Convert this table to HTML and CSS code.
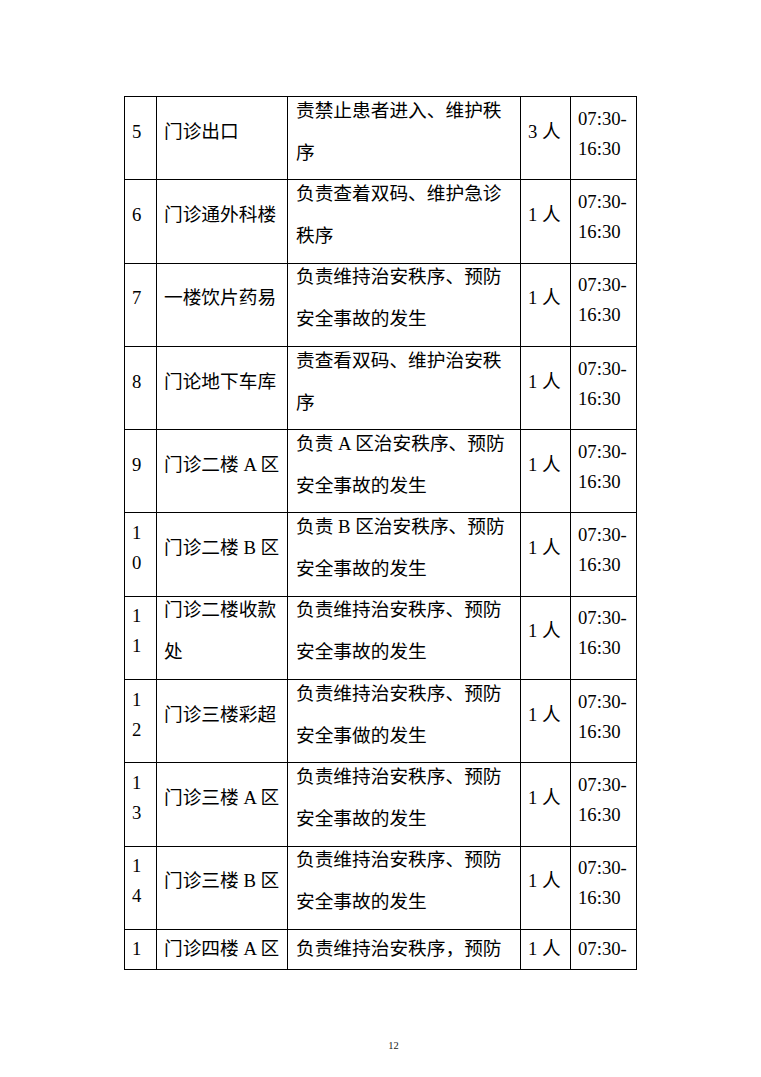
FILE: index.html
```html
<!DOCTYPE html>
<html lang="zh-CN">
<head>
<meta charset="utf-8">
<title>门诊岗位表</title>
<link rel="stylesheet" href="styles.css">
</head>
<body>
<div class="page">
  <table class="duty-table">
    <colgroup>
      <col class="c-no"><col class="c-place"><col class="c-duty"><col class="c-count"><col class="c-time">
    </colgroup>
    <tbody>
      <tr>
        <td><div class="lat">5</div></td>
        <td><div class="cjk">门诊出口</div></td>
        <td><div class="cjk">责禁止患者进入、维护秩<br>序</div></td>
        <td><div class="cjk">3 人</div></td>
        <td><div class="tm">07:30-<br>16:30</div></td>
      </tr>
      <tr>
        <td><div class="lat">6</div></td>
        <td><div class="cjk">门诊通外科楼</div></td>
        <td><div class="cjk">负责查着双码、维护急诊<br>秩序</div></td>
        <td><div class="cjk">1 人</div></td>
        <td><div class="tm">07:30-<br>16:30</div></td>
      </tr>
      <tr>
        <td><div class="lat">7</div></td>
        <td><div class="cjk">一楼饮片药易</div></td>
        <td><div class="cjk">负责维持治安秩序、预防<br>安全事故的发生</div></td>
        <td><div class="cjk">1 人</div></td>
        <td><div class="tm">07:30-<br>16:30</div></td>
      </tr>
      <tr>
        <td><div class="lat">8</div></td>
        <td><div class="cjk">门论地下车库</div></td>
        <td><div class="cjk">责查看双码、维护治安秩<br>序</div></td>
        <td><div class="cjk">1 人</div></td>
        <td><div class="tm">07:30-<br>16:30</div></td>
      </tr>
      <tr>
        <td><div class="lat">9</div></td>
        <td><div class="cjk">门诊二楼 A 区</div></td>
        <td><div class="cjk">负责 A 区治安秩序、预防<br>安全事故的发生</div></td>
        <td><div class="cjk">1 人</div></td>
        <td><div class="tm">07:30-<br>16:30</div></td>
      </tr>
      <tr>
        <td><div class="lat">1<br>0</div></td>
        <td><div class="cjk">门诊二楼 B 区</div></td>
        <td><div class="cjk">负责 B 区治安秩序、预防<br>安全事故的发生</div></td>
        <td><div class="cjk">1 人</div></td>
        <td><div class="tm">07:30-<br>16:30</div></td>
      </tr>
      <tr>
        <td><div class="lat">1<br>1</div></td>
        <td><div class="cjk">门诊二楼收款<br>处</div></td>
        <td><div class="cjk">负责维持治安秩序、预防<br>安全事故的发生</div></td>
        <td><div class="cjk">1 人</div></td>
        <td><div class="tm">07:30-<br>16:30</div></td>
      </tr>
      <tr>
        <td><div class="lat">1<br>2</div></td>
        <td><div class="cjk">门诊三楼彩超</div></td>
        <td><div class="cjk">负责维持治安秩序、预防<br>安全事做的发生</div></td>
        <td><div class="cjk">1 人</div></td>
        <td><div class="tm">07:30-<br>16:30</div></td>
      </tr>
      <tr>
        <td><div class="lat">1<br>3</div></td>
        <td><div class="cjk">门诊三楼 A 区</div></td>
        <td><div class="cjk">负责维持治安秩序、预防<br>安全事故的发生</div></td>
        <td><div class="cjk">1 人</div></td>
        <td><div class="tm">07:30-<br>16:30</div></td>
      </tr>
      <tr>
        <td><div class="lat">1<br>4</div></td>
        <td><div class="cjk">门诊三楼 B 区</div></td>
        <td><div class="cjk">负责维持治安秩序、预防<br>安全事故的发生</div></td>
        <td><div class="cjk">1 人</div></td>
        <td><div class="tm">07:30-<br>16:30</div></td>
      </tr>
      <tr class="last">
        <td><div class="lat">1</div></td>
        <td><div class="cjk">门诊四楼 A 区</div></td>
        <td><div class="cjk">负责维持治安秩序，预防</div></td>
        <td><div class="cjk">1 人</div></td>
        <td><div class="tm">07:30-</div></td>
      </tr>
    </tbody>
  </table>
  <div class="page-number">12</div>
</div>
</body>
</html>
```
FILE: styles.css
```css
html, body {
  margin: 0;
  padding: 0;
  background: #ffffff;
}

body {
  font-family: "Liberation Serif", "Noto Sans CJK SC", serif;
  color: #000000;
}

.page {
  width: 761px;
  height: 1077px;
  box-sizing: border-box;
  padding: 96px 0 0 124px;
}

.duty-table {
  border-collapse: collapse;
  table-layout: fixed;
  width: 513px;
  font-size: 18.7px;
}

.c-no { width: 32px; }
.c-place { width: 131px; }
.c-duty { width: 233px; }
.c-count { width: 50px; }
.c-time { width: 66px; }

.duty-table tr {
  height: 83.3px;
}

.duty-table tr.last {
  height: 40px;
}

.duty-table td {
  border: 1px solid #000000;
  padding: 0 4px 0 7px;
  vertical-align: middle;
  white-space: nowrap;
  overflow: hidden;
}

.duty-table td:nth-child(3) {
  padding-left: 8px;
}

.cjk {
  line-height: 42px;
  margin-top: -13px;
}

.lat {
  line-height: 30px;
  margin-top: -13px;
}

.tm {
  line-height: 30px;
  margin-top: -9px;
}

.last .cjk,
.last .lat,
.last .tm {
  line-height: 30px;
  margin-top: 0;
}

.page-number {
  margin-top: 70px;
  padding-left: 139px;
  width: 261px;
  text-align: center;
  font-size: 10.5px;
  line-height: 12px;
  color: #222222;
}
```
